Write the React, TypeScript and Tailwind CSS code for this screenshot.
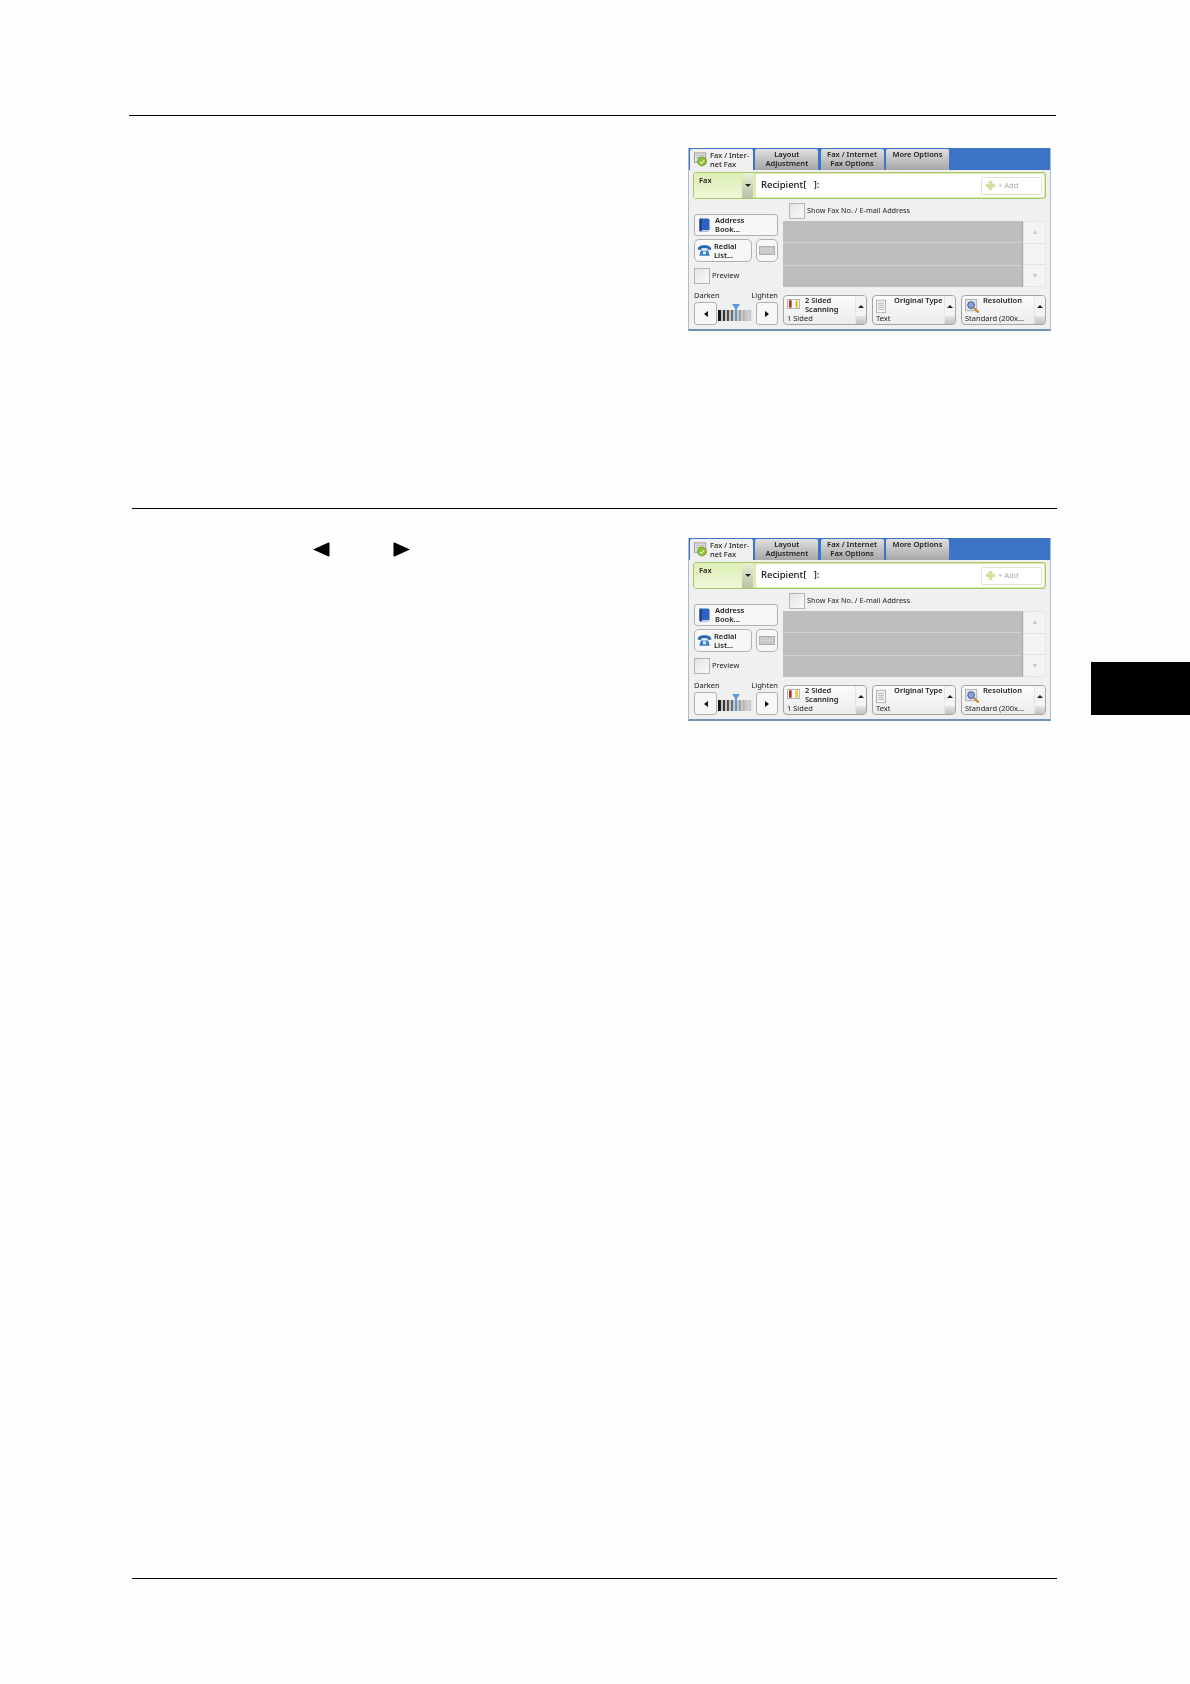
import React from 'react';

const font = { fontFamily: '"Noto Sans", sans-serif' };

function FaxTabIcon() {
  return (
    <svg viewBox="0 0 16 16" className="w-[15px] h-[15px] shrink-0">
      <rect x="0.5" y="1" width="12" height="10" fill="#e8e8e8" stroke="#9a9a9a" />
      <path d="M2 3.5h9M2 6h9" stroke="#a8a8a8" />
      <circle cx="8.5" cy="10" r="4.8" fill="#8fbe34" stroke="#5e8a1c" strokeWidth="0.7" />
      <path d="M6 10.5l2 1.6 3-3.4" fill="none" stroke="#eef6d6" strokeWidth="1.1" />
    </svg>
  );
}

function BookIcon() {
  return (
    <svg viewBox="0 0 12 15" className="w-[11px] h-[14px] shrink-0">
      <rect x="0.5" y="0.5" width="11" height="14" rx="2" fill="#2f62c0" />
      <rect x="0.5" y="0.5" width="2.5" height="14" rx="1" fill="#1d418c" />
      <rect x="3" y="13" width="8.5" height="1.5" fill="#cfd8e8" />
    </svg>
  );
}

function PhoneIcon() {
  return (
    <svg viewBox="0 0 20 16" className="w-[15px] h-[13px] shrink-0">
      <path d="M1 6c0-3 4-5 9-5s9 2 9 5v1h-5V5H6v2H1z" fill="#2a66b5" />
      <path d="M5 8h10l2 7H3z" fill="#3b7fc9" />
      <rect x="8" y="9" width="4" height="4" fill="#d8e6f5" />
    </svg>
  );
}

function KeyboardIcon() {
  return (
    <svg viewBox="0 0 18 10" className="w-[16px] h-[9px]">
      <rect x="0.5" y="0.5" width="17" height="9" fill="#c4c4c4" stroke="#a8a8a8" />
      <path d="M2 3h14M2 5h14M2 7h14" stroke="#eeeeee" strokeWidth="0.8" strokeDasharray="1.4 0.8" />
    </svg>
  );
}

function SidedIcon() {
  return (
    <svg viewBox="0 0 14 11" className="w-[13px] h-[10px]">
      <rect x="0.5" y="0.5" width="13" height="10" fill="#fff" stroke="#aaa" />
      <rect x="2" y="1.5" width="3" height="8" fill="#b5302a" />
      <rect x="9" y="1.5" width="3" height="8" fill="#f0c233" />
    </svg>
  );
}

function DocIcon() {
  return (
    <svg viewBox="0 0 12 16" className="w-[10px] h-[15px]">
      <rect x="0.5" y="0.5" width="11" height="15" fill="#f4f4f4" stroke="#a8a8a8" />
      <path d="M2.5 4h7M2.5 6.5h7M2.5 9h7M2.5 11.5h7" stroke="#a8a8a8" />
    </svg>
  );
}

function ResolutionIcon() {
  return (
    <svg viewBox="0 0 16 16" className="w-[15px] h-[15px]">
      <rect x="0.5" y="0.5" width="12" height="12" fill="#dfe3ee" stroke="#b0b0b0" />
      <circle cx="6.5" cy="6.5" r="3.6" fill="#8da0d8" stroke="#41508c" />
      <path d="M9.5 9.5l5 5" stroke="#c98a25" strokeWidth="2.2" />
    </svg>
  );
}

function PlusIcon() {
  return (
    <svg viewBox="0 0 12 12" className="w-[11px] h-[11px]">
      <path d="M4 1h4v3h3v4H8v3H4V8H1V4h3z" fill="#cfe0a0" />
    </svg>
  );
}

function Tab({ lines }: { lines: string[] }) {
  return (
    <div className="w-[63px] h-[21px] rounded-t-[2px] pt-[1px] text-center text-[7.5px] leading-[9px] font-semibold text-[#222] bg-gradient-to-b from-[#e0e0e0] to-[#a6a6a6] whitespace-nowrap">
      {lines.map((l) => (
        <div key={l}>{l}</div>
      ))}
    </div>
  );
}

function Checkbox() {
  return <div className="w-[16px] h-[16px] border border-[#b4b4b4] bg-gradient-to-br from-[#e4e4e4] to-[#fafafa] shrink-0" />;
}

function FeatureButton({
  width,
  icon,
  title,
  value,
}: {
  width: string;
  icon: React.ReactNode;
  title: string[];
  value: string;
}) {
  return (
    <div className={`${width} h-[30px] flex border border-[#a4a4a4] rounded-[4px] bg-gradient-to-b from-[#fbfbfb] to-[#ececec] overflow-hidden`}>
      <div className="flex-1 min-w-0 pl-[3px] flex flex-col justify-between pb-[1px]">
        <div className="flex items-start">
          <div className="w-[18px] shrink-0 pt-[3px]">{icon}</div>
          <div className="text-[7.5px] leading-[9px] font-semibold text-[#222] whitespace-nowrap">
            {title.map((t) => (
              <div key={t}>{t}</div>
            ))}
          </div>
        </div>
        <div className="text-[7.5px] leading-[9px] text-[#222] whitespace-nowrap">{value}</div>
      </div>
      <div className="w-[11px] flex flex-col border-l border-[#e4e4e4]">
        <div className="flex-1 flex items-center justify-center bg-[#f4f4f4]">
          <div className="w-0 h-0 border-x-[3px] border-x-transparent border-b-[3px] border-b-[#222]" />
        </div>
        <div className="h-[8px] bg-gradient-to-b from-[#e4e4e4] to-[#c2c2c2]" />
      </div>
    </div>
  );
}

function FaxPanel() {
  return (
    <div style={font} className="w-[363px] h-[183px] flex flex-col bg-[#f0f0f0] border-b-2 border-[#6d93b5] border-x border-x-[#a8bcd0] blur-[0.35px] shrink-0">
      {/* Tabs */}
      <div className="h-[22px] bg-[#3d74c6] flex gap-[2.3px] pt-[1px] pl-[1px] shrink-0">
        <div className="w-[63px] h-[21px] rounded-t-[2px] bg-[#f0f0f0] flex items-center pl-[4px] gap-[1px] text-[7.5px] leading-[9px] font-medium text-[#222] whitespace-nowrap">
          <FaxTabIcon />
          <div>
            Fax / Inter-
            <br />
            net Fax
          </div>
        </div>
        <Tab lines={['Layout', 'Adjustment']} />
        <Tab lines={['Fax / Internet', 'Fax Options']} />
        <Tab lines={['More Options']} />
      </div>

      {/* Recipient row */}
      <div className="mt-[2px] mx-[4px] h-[27px] bg-[#dcebb4] border-[1.5px] border-[#a6c766] rounded-[3px] flex items-stretch shrink-0">
        <div className="w-[59px] flex bg-gradient-to-b from-[#dcefb4] to-[#eef7d8]">
          <span className="flex-1 text-[7.5px] font-semibold leading-[10px] pl-[5px] pt-[2px] text-[#222]">Fax</span>
          <div className="w-[11px] flex flex-col items-center justify-center bg-gradient-to-b from-[#e9f1d3] to-[#b9c0a8]">
            <div className="w-0 h-0 border-x-[3px] border-x-transparent border-t-[3px] border-t-[#222]" />
          </div>
        </div>
        <div className="flex-1 ml-[3px] my-[1px] mr-[1px] bg-white rounded-[2px] flex items-center justify-between pl-[5px] pr-[2px]">
          <span className="text-[9.5px] font-medium text-[#111] whitespace-pre">Recipient[&nbsp;&nbsp;&nbsp;]:</span>
          <div className="w-[61px] h-[18px] border border-[#dfe3d2] rounded-[2px] flex items-center pl-[3px] gap-[2px] text-[7.5px] text-[#a9a9a9]">
            <PlusIcon />
            <span>+ Add</span>
          </div>
        </div>
      </div>

      {/* Body */}
      <div className="flex ml-[5px]">
        <div className="w-[84px] shrink-0">
          <div className="mt-[15px] h-[22px] border border-[#b0b0b0] rounded-[3px] bg-[#f7f7f7] flex items-center pl-[4px] gap-[5px] text-[7.5px] leading-[9px] font-semibold text-[#222]">
            <BookIcon />
            <div>
              Address
              <br />
              Book...
            </div>
          </div>
          <div className="mt-[3px] flex gap-[4px]">
            <div className="w-[58px] h-[23px] border border-[#b0b0b0] rounded-[5px] bg-[#f7f7f7] flex items-center pl-[2px] gap-[2px] text-[7.5px] leading-[9px] font-semibold text-[#222]">
              <PhoneIcon />
              <div>
                Redial
                <br />
                List...
              </div>
            </div>
            <div className="w-[22px] h-[23px] border border-[#b0b0b0] rounded-[5px] bg-[#f7f7f7] flex items-center justify-center">
              <KeyboardIcon />
            </div>
          </div>
          <div className="mt-[6px] flex items-center gap-[2px] text-[7.5px] text-[#222]">
            <Checkbox />
            <span>Preview</span>
          </div>
          <div className="mt-[6px] h-[12px] flex justify-between items-center text-[7.5px] text-[#222] whitespace-nowrap">
            <span>Darken</span>
            <span>Lighten</span>
          </div>
          <div className="flex items-center">
            <div className="w-[23px] h-[23px] border border-[#b0b0b0] rounded-[3px] bg-[#f7f7f7] flex items-center justify-center">
              <div className="w-0 h-0 border-y-[3px] border-y-transparent border-r-[4px] border-r-[#111]" />
            </div>
            <div className="w-[38px] h-[11px] mt-[4px] relative">
              <div className="absolute -top-[6px] left-[15px] w-0 h-0 border-x-[4px] border-x-transparent border-t-[6px] border-t-[#5f9bd6]" />
              <div className="absolute -top-[1px] left-[18px] w-[2px] h-[12px] bg-[#5f9bd6]" />
              <div className="h-full mx-[1px] bg-gradient-to-r from-[#111] via-[#8a8a8a] to-[#f4f4f4] flex gap-[2px] px-[3px]">
                {[0, 1, 2, 3, 4, 5, 6, 7].map((i) => (
                  <div key={i} className="w-[2px] bg-[#c8c8c8]" />
                ))}
              </div>
            </div>
            <div className="ml-auto w-[22px] h-[23px] border border-[#b0b0b0] rounded-[3px] bg-[#f7f7f7] flex items-center justify-center">
              <div className="w-0 h-0 border-y-[3px] border-y-transparent border-l-[4px] border-l-[#111]" />
            </div>
          </div>
        </div>

        <div className="ml-[5px] w-[263px] shrink-0">
          <div className="mt-[3px] h-[17px] ml-[6px] flex items-center gap-[2px] text-[7.3px] text-[#222]">
            <Checkbox />
            <span>Show Fax No. / E-mail Address</span>
          </div>
          <div className="mt-[2px] flex h-[66px]">
            <div className="w-[240px] flex flex-col border-r border-[#a8a8a8]">
              <div className="flex-1 bg-[#bdbdbd] border-b border-[#d0d0d0]" />
              <div className="flex-1 bg-[#bdbdbd] border-b border-[#d0d0d0]" />
              <div className="flex-1 bg-[#bdbdbd]" />
            </div>
            <div className="flex-1 flex flex-col bg-[#f3f3f3] border border-[#e6e6e6] rounded-[2px]">
              <div className="flex-1 flex items-center justify-center border-b border-[#e2e2e2]">
                <div className="w-0 h-0 border-x-[2.5px] border-x-transparent border-b-[4px] border-b-[#c8c8c8]" />
              </div>
              <div className="flex-1 border-b border-[#e2e2e2]" />
              <div className="flex-1 flex items-center justify-center">
                <div className="w-0 h-0 border-x-[2.5px] border-x-transparent border-t-[4px] border-t-[#c8c8c8]" />
              </div>
            </div>
          </div>
          <div className="mt-[8px] flex justify-between">
            <FeatureButton width="w-[84px]" icon={<SidedIcon />} title={['2 Sided', 'Scanning']} value="1 Sided" />
            <FeatureButton width="w-[84px]" icon={<DocIcon />} title={['Original Type']} value="Text" />
            <FeatureButton width="w-[85px]" icon={<ResolutionIcon />} title={['Resolution']} value="Standard (200x..." />
          </div>
        </div>
      </div>
    </div>
  );
}

export default function App() {
  return (
    <div className="w-[1190px] h-[1684px] bg-[#fefefe] overflow-hidden pt-[115px]">
      <div className="ml-[129px] w-[927px] h-px bg-black" />
      <div className="flex justify-end pr-[139px] pt-[32px]">
        <FaxPanel />
      </div>

      <div className="ml-[132px] mt-[177px] w-[925px] h-px bg-black" />
      <div className="flex pt-[29px]">
        <div className="w-[688px] shrink-0 pl-[313px] pt-[4px] flex items-start gap-[63px]">
          <svg viewBox="0 0 17 15" className="w-[17px] h-[15px]">
            <path d="M0 7.5L15.5 0.5Q16.5 0.2 16.5 1.5V13.5Q16.5 14.8 15.5 14.5z" fill="#000" />
          </svg>
          <svg viewBox="0 0 17 15" className="w-[17px] h-[15px]">
            <path d="M17 7.5L1.5 0.5Q0.5 0.2 0.5 1.5V13.5Q0.5 14.8 1.5 14.5z" fill="#000" />
          </svg>
        </div>
        <FaxPanel />
        <div className="ml-[40px] flex-1 pt-[124px]">
          <div className="h-[53px] bg-black" />
        </div>
      </div>

      <div className="ml-[132px] mt-[857px] w-[925px] h-px bg-black" />
    </div>
  );
}
